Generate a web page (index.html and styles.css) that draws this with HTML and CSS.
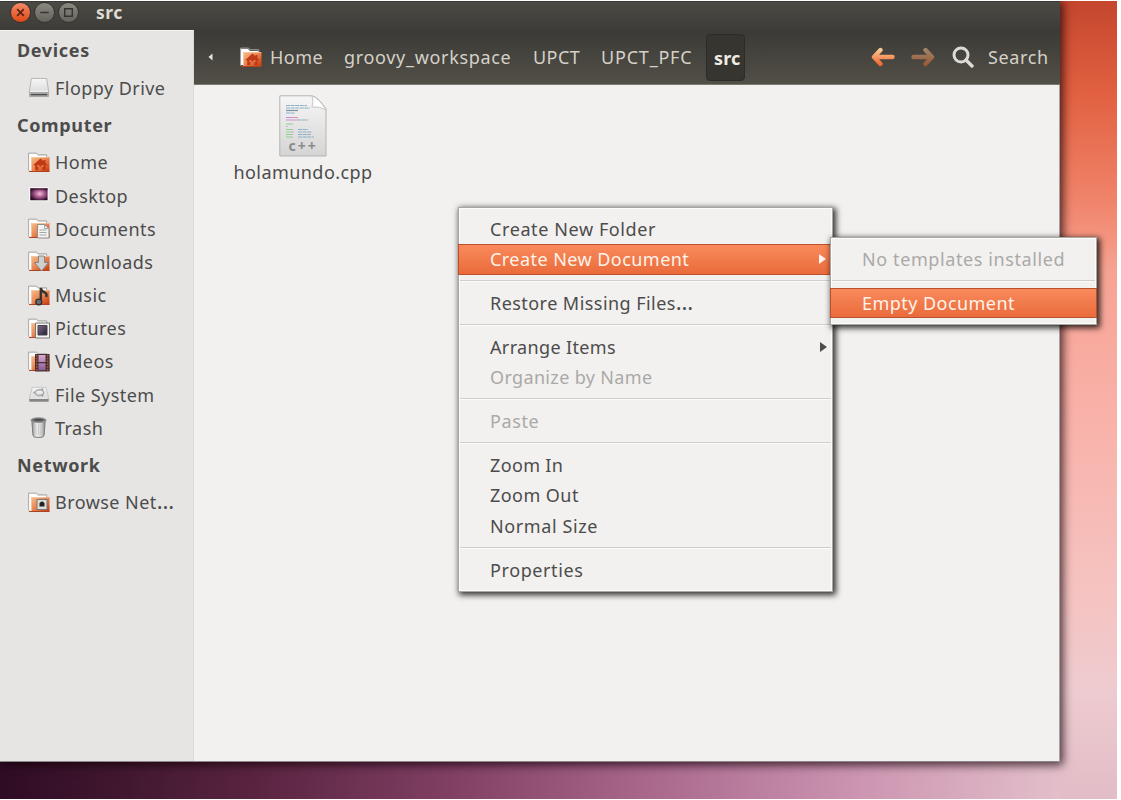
FILE: index.html
```
<!DOCTYPE html>
<html lang="en">
<head>
<meta charset="utf-8">
<title>src</title>
<link rel="stylesheet" href="styles.css">
</head>
<body>
<svg class="defs" aria-hidden="true">
  <defs>
    <linearGradient id="orange" x1="0" y1="0" x2="1" y2="1"><stop offset="0" stop-color="#f6c08a"/><stop offset=".5" stop-color="#ea8350"/><stop offset="1" stop-color="#c83508"/></linearGradient>
    <linearGradient id="arrow" gradientUnits="userSpaceOnUse" x1="0" y1="1" x2="0" y2="19"><stop offset="0" stop-color="#fbd09a"/><stop offset="1" stop-color="#f0602a"/></linearGradient>
    <linearGradient id="grey" x1="0" y1="0" x2="0" y2="1"><stop offset="0" stop-color="#f6f6f6"/><stop offset="1" stop-color="#d4d4d4"/></linearGradient>
    <linearGradient id="can" x1="0" y1="0" x2="1" y2="0"><stop offset="0" stop-color="#8b8d8c"/><stop offset=".35" stop-color="#ececec"/><stop offset=".7" stop-color="#d2d2d2"/><stop offset="1" stop-color="#858786"/></linearGradient>
    <radialGradient id="wall" cx=".55" cy=".45" r=".6"><stop offset="0" stop-color="#f0bfd0"/><stop offset=".5" stop-color="#a4558a"/><stop offset="1" stop-color="#2c0b26"/></radialGradient>
    <linearGradient id="film" x1="0" y1="0" x2="0" y2="1"><stop offset="0" stop-color="#d9a9d2"/><stop offset="1" stop-color="#8d5b96"/></linearGradient>
    <linearGradient id="photo" x1="0" y1="0" x2="1" y2="1"><stop offset="0" stop-color="#806a8c"/><stop offset="1" stop-color="#241c30"/></linearGradient>
    <symbol id="folder" viewBox="0 0 22 21">
      <path d="M1 2h7l2 2h8.500v14H1z" fill="#fff"/>
      <path d="M.6 18.600V1.100H8.600L10 2.800H18.700V5" fill="none" stroke="#a9a9a6"/>
      <path d="M3 5h18.500v14.500H3z" fill="url(#orange)"/>
      <path d="M3.500 19V5.500H21" stroke="#f7cfae" stroke-opacity=".7" fill="none"/>
      <path d="M1 19.500h20.500" stroke="#a94522" fill="none"/>
    </symbol>
    <symbol id="homefolder" viewBox="0 0 22 21">
      <use href="#folder"/>
      <path d="M12.500 6.500L5 13.300h2.200V18.300h3.200V14.500h4V18.300h3.200V13.300H20L17.500 11V8h-2v1.300z" fill="#c23a15"/>
      <path d="M9.300 13h2v2h-2zM13.500 13h2v2h-2z" fill="#e47945"/>
    </symbol>
  </defs>
</svg>
<div class="desktop">
  <main class="window">
    <header class="titlebar">
      <span class="wbtn close"><svg viewBox="0 0 20 20"><path d="M6.500 6.500l7 7M13.500 6.500l-7 7"/></svg></span>
      <span class="wbtn"><svg viewBox="0 0 20 20"><path d="M5.500 10h9"/></svg></span>
      <span class="wbtn"><svg viewBox="0 0 20 20"><path d="M6 6h8v8H6z"/></svg></span>
      <span class="title">src</span>
    </header>
    <div class="body">
      <aside class="sidebar">
        <h2>Devices</h2>
        <div class="place"><svg viewBox="0 0 22 22"><path d="M3 1.500h16l2 13v6H1v-6z" fill="url(#grey)" stroke="#b2b2b2"/><path d="M1 15.500h20v4.500q0 1-1 1H2q-1 0-1-1z" fill="#a6a6a6"/><path d="M1.500 15h19" stroke="#fafafa"/><path d="M2.500 18.500h17" stroke="#444" stroke-width="1.200"/></svg><span>Floppy Drive</span></div>
        <h2>Computer</h2>
        <div class="place"><svg viewBox="0 0 22 21"><use href="#homefolder"/></svg><span>Home</span></div>
        <div class="place"><svg viewBox="0 0 22 22"><path d="M.8 2.500h20.200v14.500H.8z" fill="#fff"/><path d="M1.800 3.500h18.200v12.500H1.800z" fill="url(#wall)"/><path d="M2 4.200h18" stroke="#301027"/></svg><span>Desktop</span></div>
        <div class="place"><svg viewBox="0 0 22 21"><use href="#folder"/><path d="M9.500 6.500h7l4.500 4v9.500H9.500z" fill="#f3f3f1" stroke="#8d8d8b"/><path d="M16.500 6.500v4H21M11.500 12h7M11.500 14.500h7M11.500 17h7" fill="none" stroke="#a5a5a3"/></svg><span>Documents</span></div>
        <div class="place"><svg viewBox="0 0 22 21"><use href="#folder"/><path d="M10.500 5h6v6.500h4L13.500 20 6.500 11.500h4z" fill="#cfcfcd" stroke="#858583"/></svg><span>Downloads</span></div>
        <div class="place"><svg viewBox="0 0 22 21"><use href="#folder"/><path d="M12.800 17V3q1 4 4 4.500q2.500 1 1.500 4.500" fill="none" stroke="#343434" stroke-width="2.400"/><ellipse cx="10.800" cy="17" rx="3" ry="2.800" fill="#6c6c6c" stroke="#303030" stroke-width="1.300"/></svg><span>Music</span></div>
        <div class="place"><svg viewBox="0 0 22 21"><use href="#folder"/><path d="M7.500 5h14v15h-14z" fill="#f4f4f2" stroke="#777"/><path d="M10 7.500h9v9.500H10z" fill="url(#photo)" stroke="#46434a"/></svg><span>Pictures</span></div>
        <div class="place"><svg viewBox="0 0 22 21"><use href="#folder"/><path d="M7 3h14.500v17.500H7z" fill="#403331"/><path d="M10.500 4h7v7h-7zM10.500 12.200h7v7h-7z" fill="url(#film)"/><path d="M8.700 4v16M19.600 4v16" stroke="#b4573d" stroke-width="1.500" stroke-dasharray="1.500 1.300"/></svg><span>Videos</span></div>
        <div class="place"><svg viewBox="0 0 22 22"><path d="M4 3.500h14l3 10.500v4H1v-4z" fill="url(#grey)" stroke="#c6c6c6"/><path d="M1 15.500h20v3H1z" fill="#858585"/><path d="M2 15h18" stroke="#eee"/><ellipse cx="11.500" cy="9" rx="4.500" ry="3" fill="none" stroke="#aaa" stroke-width="1.500"/><circle cx="6" cy="9" r="1.200" fill="#aaa"/><circle cx="14.500" cy="5.500" r="1.100" fill="#999"/><circle cx="14.500" cy="12" r="1.100" fill="#999"/></svg><span>File System</span></div>
        <div class="place"><svg viewBox="0 0 22 22"><path d="M3.500 3.500h14l-1.200 16q-.2 2-5.800 2t-5.800-2z" fill="url(#can)" stroke="#777"/><path d="M7.500 7.500l.8 11M10.500 7.500v11M13.500 7.500l-.8 11" stroke="#bbb" stroke-width=".6"/><ellipse cx="10.500" cy="3.300" rx="8" ry="2.600" fill="#777" stroke="#9a9a9a"/><ellipse cx="10.500" cy="3" rx="5.500" ry="1.200" fill="#4d4d4d"/></svg><span>Trash</span></div>
        <h2>Network</h2>
        <div class="place"><svg viewBox="0 0 22 21"><use href="#folder"/><path d="M9 7.500h10v10H9z" fill="#deded9" stroke="#777"/><path d="M11.500 11l2-1.500h1l2 1.500v3.500h-5z" fill="#222"/></svg><span>Browse Net<span class="dots">…</span></span></div>
      </aside>
      <section class="content">
        <nav class="toolbar">
          <svg class="prev" viewBox="0 0 5 8"><path d="M4.500 .5v7L.5 4z" fill="#e8e6e0"/></svg>
          <svg class="crumb-icon" viewBox="0 0 22 21"><use href="#homefolder"/></svg>
          <span class="crumb c-home">Home</span>
          <span class="crumb c-groovy">groovy_workspace</span>
          <span class="crumb c-upct">UPCT</span>
          <span class="crumb c-pfc">UPCT_PFC</span>
          <span class="crumb current">src</span>
          <span class="tools">
            <svg class="nav-arrow" viewBox="0 0 24 20"><path d="M9.500 3L3 10l6.500 7M3.500 10H21.500v.01" fill="none" stroke="url(#arrow)" stroke-width="4.400" stroke-linecap="round" stroke-linejoin="round"/></svg>
            <svg class="nav-arrow forward" viewBox="0 0 24 20"><path d="M14.500 3L21 10l-6.500 7M20.500 10H2.500v.01" fill="none" stroke="url(#arrow)" stroke-width="4.400" stroke-linecap="round" stroke-linejoin="round"/></svg>
            <svg class="lens" viewBox="0 0 22 22"><circle cx="9" cy="9" r="7" fill="none" stroke="#dfdbd2" stroke-width="3"/><path d="M14 14l6 6" stroke="#dfdbd2" stroke-width="3.400" stroke-linecap="round"/></svg>
            <span class="search">Search</span>
          </span>
        </nav>
        <div class="files">
          <figure class="file">
            <svg viewBox="0 0 48 62">
              <path d="M.8.800H33q6 1 14 13v47.200H.8z" fill="url(#grey)" stroke="#b4b4b4"/>
              <path d="M33 1q2 5 0 11q8-1 14 3Q40 3 33 1z" fill="#fff" stroke="#c6c6c6"/>
              <g stroke-width="1.200" fill="none">
                <path d="M7 10.500h21M7 13h24M7 18h9" stroke="#8bb0c6" stroke-dasharray="4 .6"/>
                <path d="M7 15.500h12" stroke="#7c909e"/>
                <path d="M7 22.500h5M7 25h5" stroke="#c08fdf"/><path d="M12 22.500h7M12 25h6" stroke="#de8fba"/>
                <path d="M18 25h11M19 34.500h10M19 37h14M19 39.500h13M19 42h16" stroke="#8bb0c6" stroke-dasharray="4 .6"/>
                <path d="M7 29h4M7 34.500h4M7 37h5M7 39.500h4M7 42h4" stroke="#8cd882"/>
                <path d="M11 29h3M7 31.500h1.500M11 34.500h3M12 37h3M11 39.500h3M11 42h3" stroke="#b5b5b5"/>
              </g>
              <text x="9.500" y="56" class="ext">c++</text>
            </svg>
            <figcaption>holamundo.cpp</figcaption>
          </figure>
        </div>
      </section>
    </div>
  </main>

  <div class="menu context">
    <div class="item wide">Create New Folder</div>
    <div class="item active">Create New Document<i class="more"></i></div>
    <hr>
    <div class="item"><span>Restore Missing Files<span class="dots">…</span></span></div>
    <hr>
    <div class="item tight">Arrange Items<i class="more"></i></div>
    <div class="item off tight">Organize by Name</div>
    <hr>
    <div class="item off wide">Paste</div>
    <hr>
    <div class="item tight">Zoom In</div>
    <div class="item">Zoom Out</div>
    <div class="item wide">Normal Size</div>
    <hr>
    <div class="item wide">Properties</div>
  </div>
  <div class="menu submenu">
    <div class="item off wide">No templates installed</div>
    <hr>
    <div class="item active">Empty Document</div>
  </div>
</div>
</body>
</html>
```
FILE: styles.css
```
* { box-sizing: border-box; }
body {
  margin: 0;
  padding-top: 1px;
  width: 1121px;
  height: 800px;
  overflow: hidden;
  background: #fff;
  font: 18px/22px "Noto Sans", "Open Sans", sans-serif;
  letter-spacing: .45px;
  color: #4c4c4c;
}
svg { display: block; flex: none; }
.defs { position: absolute; width: 0; height: 0; }

.desktop {
  width: 1117px;
  height: 798px;
  overflow: hidden;
  background:
    linear-gradient(to bottom, #c4462d 0, #e26142 95px, #f0846a 200px, #f7a393 270px, #f9b0a7 400px, #f5c4c2 600px, #eecbd0 690px, #e2bcc6 798px) right top / 57px 100% no-repeat,
    linear-gradient(to right, #2f0c24 0, #421830 130px, #5a2440 255px, #803f63 450px, #a9688c 650px, #cb93b0 850px, #e3bfca 1060px);
}

.window {
  display: flex;
  flex-direction: column;
  width: 1060px;
  height: 761px;
  border-right: 1px solid #a7a5a1;
  border-bottom: 1px solid #8d8789;
  background: #f2f1ef;
  box-shadow: 2px 2px 9px 1px rgba(20, 0, 8, .75);
}
.titlebar {
  display: flex;
  align-items: center;
  flex: none;
  width: 1060px;
  height: 29px;
  padding: 0 0 7px 10px;
  gap: 3px;
  background: linear-gradient(#4b4a44, #3d3c38);
  border-top: 1px solid #383733;
}
.wbtn {
  width: 21px;
  height: 21px;
  border: 1px solid #33322e;
  border-radius: 50%;
  background: linear-gradient(#8b8880, #65635c);
}
.wbtn svg { width: 19px; height: 19px; fill: none; stroke: #35342f; stroke-width: 1.5; }
.wbtn.close { background: linear-gradient(#f58a68, #dd4814); }
.wbtn.close svg { stroke: #5c2312; stroke-width: 1.8; }
.title { margin: -1px 0 0 14px; font-size: 17.500px; line-height: 18px; font-weight: 700; color: #dfdbd2; }

.body { display: flex; flex: 1; min-height: 0; }
.sidebar {
  width: 194px;
  flex: none;
  background: #e6e5e3;
  border-right: 1px solid #dbd9d6;
  border-top: 1px solid #f4f3f1;
}
.sidebar h2 {
  margin: 0;
  padding-left: 17px;
  height: 41.400px;
  font-size: 18px;
  line-height: 39.400px;
  font-weight: 700;
  letter-spacing: .65px;
}
.place {
  display: flex;
  align-items: center;
  height: 33.200px;
  padding: 0 0 2.400px 28px;
  gap: 5px;
  white-space: nowrap;
}
.place svg { width: 22px; height: 21px; }
.dots { letter-spacing: 0; font-size: 22px; line-height: 18px; }

.content { width: 866px; flex: none; }
.toolbar {
  display: flex;
  align-items: center;
  height: 55px;
  padding-left: 14px;
  background: linear-gradient(#3b3a36, #524f47);
  border-bottom: 1px solid #7b7871;
  color: #d5d1c8;
  white-space: nowrap;
}
.prev { width: 5px; height: 8px; }
.crumb-icon { width: 22px; height: 21px; margin-left: 27px; }
.crumb { flex: none; }
.c-home { margin-left: 8px; width: 74px; }
.c-groovy { width: 189px; letter-spacing: .68px; }
.c-upct { width: 68px; letter-spacing: .45px; }
.c-pfc { width: 105px; letter-spacing: .8px; }
.current {
  width: 39px;
  height: 47px;
  padding-left: 7px;
  line-height: 47px;
  border: 1px solid #2d2c29;
  border-radius: 4px;
  background: #363530;
  font-weight: 700;
  letter-spacing: .2px;
  color: #efece4;
}
.tools { display: flex; align-items: center; margin-left: 126px; }
.nav-arrow { width: 24px; height: 20px; }
.forward { margin-left: 16px; opacity: .5; }
.lens { width: 22px; height: 22px; margin-left: 17px; }
.search { margin-left: 14px; letter-spacing: .65px; }

.files { padding: 10px 0 0 29px; }
.file {
  display: flex;
  flex-direction: column;
  align-items: center;
  width: 160px;
  margin: 0;
}
.file svg { width: 48px; height: 62px; }
.file figcaption { margin-top: 4px; }
.ext { font: 700 14px "Noto Sans", sans-serif; fill: #8a8a8a; letter-spacing: 2px; }

.menu {
  position: absolute;
  padding: 5.600px 0 5px;
  border: 1px solid #a9a7a4;
  background: #f2f1ef;
  box-shadow: inset 0 0 0 1px #fcfcfb, 2px 2px 6px 1px rgba(0, 0, 0, .8);
}
.context { left: 458px; top: 207px; width: 375px; height: 385px; }
.submenu { left: 830px; top: 237px; width: 267px; height: 88px; padding-top: 6px; }
.item {
  display: flex;
  align-items: center;
  justify-content: space-between;
  height: 30.500px;
  padding: 0 5px 0 31px;
  white-space: nowrap;
}
.wide { letter-spacing: .6px; }
.tight { letter-spacing: .35px; }
.menu hr {
  height: 2px;
  margin: 5.650px 1px;
  border: 0;
  border-top: 1px solid #cfcdca;
  border-bottom: 1px solid #fbfbfa;
}
.off { color: #aaa9a7; }
.active {
  margin: 0 -1px;
  padding: 0 6px 0 31px;
  border: 1px solid #b9512c;
  color: #fff3ea;
  background: linear-gradient(#f98a5c, #ea6b3b);
}
.more {
  border-left: 7px solid currentColor;
  border-top: 5px solid transparent;
  border-bottom: 5px solid transparent;
}
```
